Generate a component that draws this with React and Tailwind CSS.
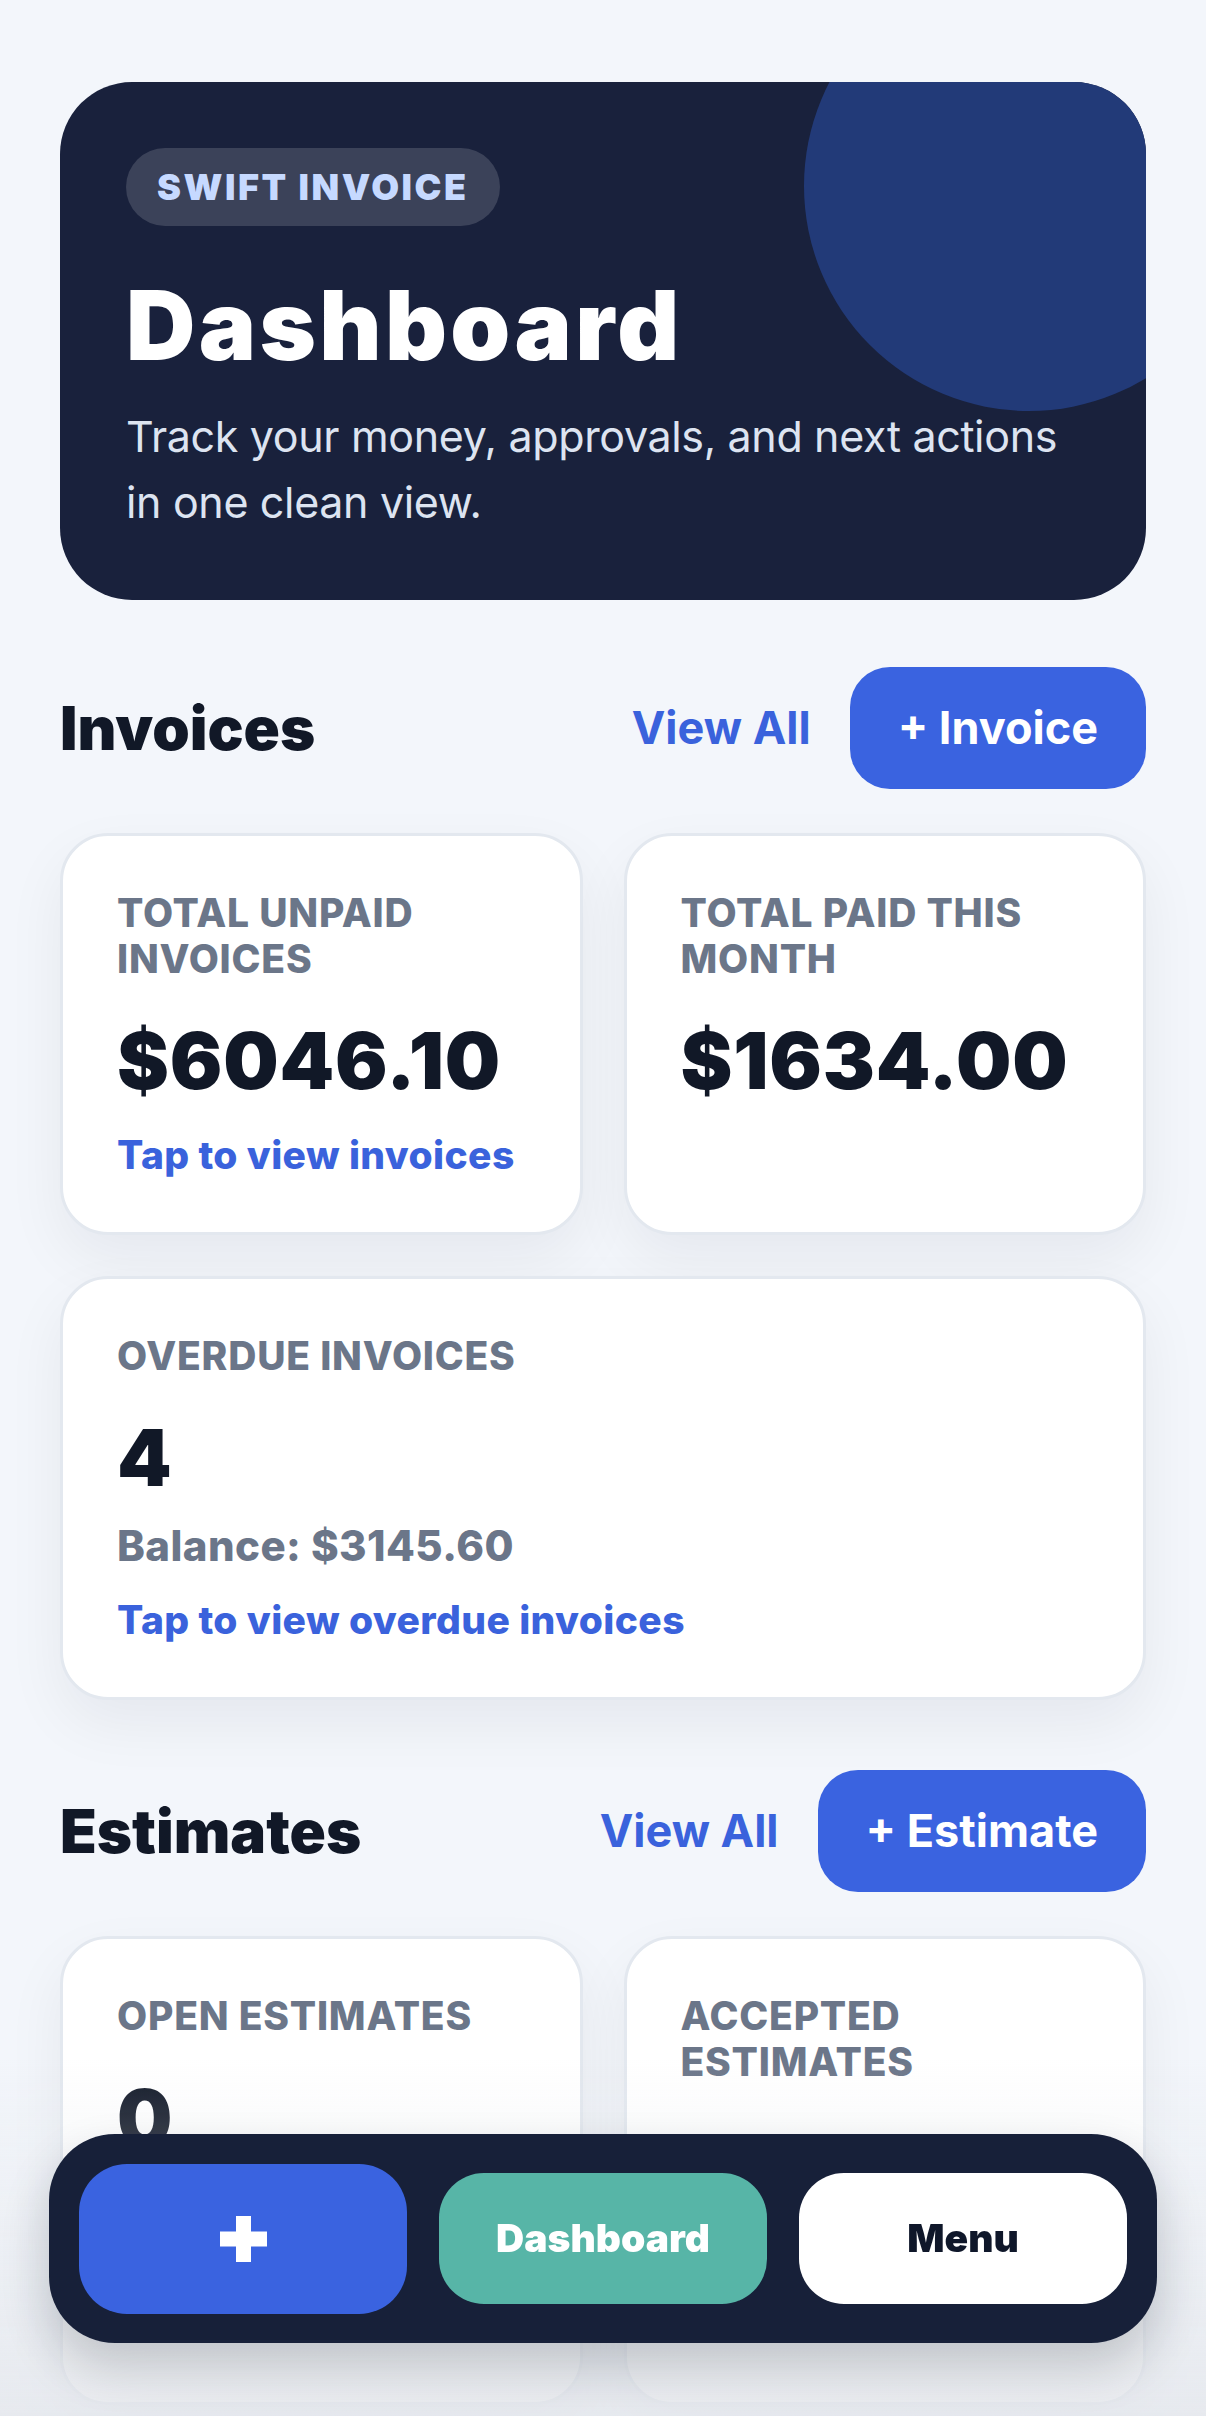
import { useState } from 'react';

const invoiceStats = [
    { label: 'Total Unpaid Invoices', value: '$6046.10', link: 'Tap to view invoices' },
    { label: 'Total Paid This Month', value: '$1634.00' },
];

const estimateStats = [
    { label: 'Open Estimates', value: '0', note: 'Value: $0.00', link: 'Tap to view open' },
    { label: 'Accepted Estimates', value: '2', note: 'Value: $1250.00', link: 'Tap to view' },
];

const StatCard = ({ label, value, note, link, tight = false, className = '' }) => (
    <div className={`rounded-[48px] border-[3px] border-[#e3e8ef] bg-white p-[54px] shadow-[0_24px_60px_rgba(15,23,42,0.06)] ${className}`}>
        <p className="text-[39px] leading-[46px] font-extrabold uppercase tracking-[0.02em] text-[#6b7689]">{label}</p>
        <p className="mt-[36px] text-[78px] leading-[86px] font-black tracking-[0.01em] text-[#111827]">{value}</p>
        {note && <p className="mt-[22px] text-[42px] leading-[46px] font-extrabold tracking-[0.01em] text-[#6b7689]">{note}</p>}
        {link && (
            <p className={`${tight ? 'mt-[18px]' : 'mt-[28px]'} text-[39px] leading-[46px] font-extrabold tracking-[0.01em] text-[#3a62dc]`}>
                {link}
            </p>
        )}
    </div>
);

const SectionHeader = ({ title, action, className = '' }) => (
    <div className={`flex items-center justify-between ${className}`}>
        <h2 className="text-[60px] leading-[72px] font-black text-[#111827]">{title}</h2>
        <div className="flex items-center gap-[39px]">
            <button className="text-[45px] font-bold text-[#3a62dc]">View All</button>
            <button className="h-[122px] rounded-[40px] bg-[#3a63e0] px-[48px] text-[45px] font-bold text-white">+ {action}</button>
        </div>
    </div>
);

const PlusIcon = () => (
    <svg width="47" height="46" viewBox="0 0 47 46" fill="#ffffff">
        <rect x="16" y="0" width="15" height="46" />
        <rect x="0" y="15.5" width="47" height="15" />
    </svg>
);

const App = () => {
    const [tab, setTab] = useState('dashboard');

    return (
        <div className="min-h-screen bg-[#f3f6fb] px-[60px] pt-[82px] pb-[320px] font-['Inter',sans-serif]">
            {/* hero */}
            <section className="relative overflow-hidden rounded-[72px] bg-[#19213c] px-[66px] pt-[66px] pb-[65px]">
                <div className="absolute left-[744px] top-[-121px] h-[450px] w-[450px] rounded-full bg-[#223a78]" />
                <div className="relative">
                    <span className="inline-flex h-[78px] items-center rounded-full bg-white/15 px-[31px] text-[36px] font-black tracking-[0.07em] text-[#c6d9ff]">
                        SWIFT INVOICE
                    </span>
                    <h1 className="mt-[46px] text-[96px] leading-[106px] font-black tracking-[0.035em] text-white">Dashboard</h1>
                    <p className="mt-[25px] text-[43px] leading-[66px] tracking-[-0.008em] text-[#dde4f1]">
                        Track your money, approvals, and next actions in one clean view.
                    </p>
                </div>
            </section>

            {/* invoices */}
            <SectionHeader title="Invoices" action="Invoice" className="mt-[67px]" />
            <div className="mt-[44px] grid grid-cols-2 gap-[41px]">
                {invoiceStats.map((s) => (
                    <StatCard key={s.label} {...s} />
                ))}
                <StatCard
                    className="col-span-2"
                    label="Overdue Invoices"
                    value="4"
                    note="Balance: $3145.60"
                    link="Tap to view overdue invoices"
                />
            </div>

            {/* estimates */}
            <SectionHeader title="Estimates" action="Estimate" className="mt-[70px]" />
            <div className="mt-[44px] grid grid-cols-2 gap-[41px]">
                {estimateStats.map((s) => (
                    <StatCard key={s.label} {...s} tight className="min-h-[469px]" />
                ))}
            </div>

            {/* bottom fade */}
            <div className="pointer-events-none fixed inset-x-0 bottom-0 h-[360px] bg-linear-to-b from-[#f3f6fb]/0 to-[#e4e7ec]/80" />

            {/* bottom nav */}
            <nav className="fixed bottom-[73px] left-[49px] right-[49px] flex h-[209px] items-center gap-[32px] rounded-[66px] bg-[#172039] px-[30px] shadow-[0_24px_48px_rgba(15,23,42,0.2)]">
                <button
                    onClick={() => setTab('new')}
                    className="flex h-[150px] flex-1 items-center justify-center rounded-[48px] bg-[#3a63e0]"
                >
                    <PlusIcon />
                </button>
                <button
                    onClick={() => setTab('dashboard')}
                    className={`h-[131px] flex-1 rounded-[45px] text-[39px] font-black ${tab === 'dashboard' ? 'bg-[#57b5a7] text-white' : 'bg-white text-[#0f172a]'}`}
                >
                    Dashboard
                </button>
                <button
                    onClick={() => setTab('menu')}
                    className={`h-[131px] flex-1 rounded-[45px] text-[39px] font-black ${tab === 'menu' ? 'bg-[#57b5a7] text-white' : 'bg-white text-[#0f172a]'}`}
                >
                    Menu
                </button>
            </nav>
        </div>
    );
};

export default App;
